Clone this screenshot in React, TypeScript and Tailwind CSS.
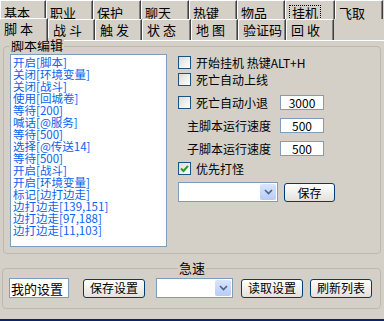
const topTabs = [
  { label: "基本", w: "w-[46px]" },
  { label: "职业", w: "w-[47px]" },
  { label: "保护", w: "w-[48px]" },
  { label: "聊天", w: "w-[48px]" },
  { label: "热键", w: "w-[48px]" },
  { label: "物品", w: "w-[48px]" },
  { label: "挂机", w: "w-[50px]", active: true },
  { label: "飞取", w: "w-[48px]" },
];

const subTabs = [
  { label: "脚 本", w: "w-[48px]", active: true },
  { label: "战 斗", w: "w-[47px]" },
  { label: "触 发", w: "w-[47px]" },
  { label: "状 态", w: "w-[49px]" },
  { label: "地 图", w: "w-[47px]" },
  { label: "验证码", w: "w-[48px]" },
  { label: "回 收", w: "w-[48px]" },
];

const script = [
  "开启[脚本]",
  "关闭[环境变量]",
  "关闭[战斗]",
  "使用[回城卷]",
  "等待[200]",
  "喊话[@服务]",
  "等待[500]",
  "选择[@传送14]",
  "等待[500]",
  "开启[战斗]",
  "开启[环境变量]",
  "标记[边打边走]",
  "边打边走[139,151]",
  "边打边走[97,188]",
  "边打边走[11,103]",
];

function Checkbox({ checked }: { checked?: boolean }) {
  return (
    <div className="flex h-[13px] w-[13px] shrink-0 items-center justify-center border border-[#1c5180] bg-gradient-to-br from-[#dcdcd7] to-white">
      {checked && (
        <svg width="9" height="9" viewBox="0 0 9 9">
          <path d="M1 4.5 L3.5 7 L8 1.8" fill="none" stroke="#21a121" strokeWidth="2" />
        </svg>
      )}
    </div>
  );
}

function NumBox({ value }: { value: string }) {
  return (
    <div className="flex h-[15px] w-[44px] items-center justify-center border border-[#7f9db9] bg-white leading-none">
      {value}
    </div>
  );
}

function Combo({ w }: { w: string }) {
  return (
    <div className={`flex h-[20px] ${w} items-stretch justify-end border border-[#7f9db9] bg-white p-[1px]`}>
      <div className="flex w-[16px] items-center justify-center rounded-[2px] bg-gradient-to-b from-[#d9e5fd] to-[#b6cbf7]">
        <svg width="9" height="6" viewBox="0 0 9 6">
          <path d="M1 1 L4.5 4.5 L8 1" fill="none" stroke="#4d6185" strokeWidth="1.6" />
        </svg>
      </div>
    </div>
  );
}

function Button({ label, w, h = "h-[19px]" }: { label: string; w: string; h?: string }) {
  return (
    <div className={`flex ${h} ${w} items-center justify-center rounded-[3px] border border-[#003c74] bg-gradient-to-b from-white to-[#e3e1da] leading-none`}>
      {label}
    </div>
  );
}

export default function App() {
  return (
    <div className="relative flex h-[321px] w-[384px] flex-col overflow-hidden bg-[#d4d0c8] font-['Noto_Sans_CJK_SC','Noto_Sans',sans-serif] text-[12px] text-black">
      {/* outer tabs */}
      <div className="flex h-[19px]">
        {topTabs.map((t) => (
          <div
            key={t.label}
            className={`${t.w} flex h-full items-center border-l border-t border-r border-l-white border-t-white border-r-[#404040] pl-[3px] pt-[4px] shadow-[inset_-1px_0_0_#808080]`}
          >
            {t.active ? (
              <span className="border border-dotted border-black px-[2px] text-[13px] leading-[13px]">{t.label}</span>
            ) : (
              <span className="text-[13px] leading-none">{t.label}</span>
            )}
          </div>
        ))}
      </div>

      {/* inner tabs */}
      <div className="flex h-[21px] items-end">
        {subTabs.map((t) =>
          t.active ? (
            <div
              key={t.label}
              className={`${t.w} relative z-10 -mb-[1px] flex h-[23px] items-start rounded-tl-[2px] border-t border-r border-t-white border-r-[#404040] bg-[#d4d0c8] pl-[4px] pt-[3px] text-[13px] leading-none shadow-[inset_-1px_0_0_#808080]`}
            >
              {t.label}
            </div>
          ) : (
            <div
              key={t.label}
              className={`${t.w} flex h-[21px] items-start rounded-tl-[2px] border-l border-t border-r border-l-white border-t-white border-r-[#404040] pl-[4px] pt-[3px] text-[13px] leading-none shadow-[inset_-1px_0_0_#808080]`}
            >
              {t.label}
            </div>
          )
        )}
      </div>

      {/* panel */}
      <div className="border-t border-white pt-[5px]">
        <div className="relative ml-[3px] h-[208px] w-[378px] rounded-[4px] border border-[#bcb9b0]">
          <span className="absolute left-[6px] top-[-9px] bg-[#d4d0c8] px-[1px] text-[13px] leading-[14px]">
            脚本编辑
          </span>
          <div className="flex pl-[6px] pt-[7px]">
            <div className="h-[193px] w-[157px] overflow-hidden border border-[#7f9db9] bg-white pl-[2px] pt-[1px] text-[#0a62f0]">
              {script.map((s, i) => (
                <div key={i} className="h-[12px] whitespace-nowrap text-[11.5px] leading-[12px]">
                  {s}
                </div>
              ))}
            </div>

            <div className="ml-[11px] flex flex-col">
              <div className="mt-[2px] flex h-[13px] items-center gap-[5px]">
                <Checkbox />
                <span className="leading-none">开始挂机 热键ALT+H</span>
              </div>
              <div className="mt-[4px] flex h-[13px] items-center gap-[5px]">
                <Checkbox />
                <span className="leading-none">死亡自动上线</span>
              </div>
              <div className="mt-[9px] flex h-[15px] items-center">
                <div className="flex w-[102px] items-center gap-[5px]">
                  <Checkbox />
                  <span className="leading-none">死亡自动小退</span>
                </div>
                <NumBox value="3000" />
              </div>
              <div className="mt-[8px] flex h-[15px] items-center">
                <span className="w-[102px] pl-[9px] leading-none">主脚本运行速度</span>
                <NumBox value="500" />
              </div>
              <div className="mt-[8px] flex h-[15px] items-center">
                <span className="w-[102px] pl-[9px] leading-none">子脚本运行速度</span>
                <NumBox value="500" />
              </div>
              <div className="mt-[6px] flex h-[13px] items-center gap-[5px]">
                <Checkbox checked />
                <span className="leading-none">优先打怪</span>
              </div>
              <div className="mt-[7px] flex items-start gap-[6px]">
                <Combo w="w-[100px]" />
                <div className="pt-[1px]">
                  <Button label="保存" w="w-[51px]" h="h-[19px]" />
                </div>
              </div>
            </div>
          </div>
        </div>

        {/* quick group */}
        <div className="relative ml-[2px] mt-[14px] h-[41px] w-[379px] rounded-[4px] border border-[#bcb9b0]">
          <span className="absolute left-[175px] top-[-8px] bg-[#d4d0c8] px-[1px] text-[13px] leading-[14px]">
            急速
          </span>
          <div className="flex items-center pl-[6px] pt-[9px]">
            <div className="flex h-[20px] w-[60px] items-center border border-[#7f9db9] bg-white pl-[1px] text-[13px] leading-none">
              我的设置
            </div>
            <div className="ml-[14px]">
              <Button label="保存设置" w="w-[62px]" h="h-[19px]" />
            </div>
            <div className="ml-[11px]">
              <Combo w="w-[77px]" />
            </div>
            <div className="ml-[8px]">
              <Button label="读取设置" w="w-[62px]" h="h-[19px]" />
            </div>
            <div className="ml-[7px]">
              <Button label="刷新列表" w="w-[62px]" h="h-[19px]" />
            </div>
          </div>
        </div>
      </div>

      <div className="mt-auto h-[2px] bg-[#0a246a]" />
    </div>
  );
}
